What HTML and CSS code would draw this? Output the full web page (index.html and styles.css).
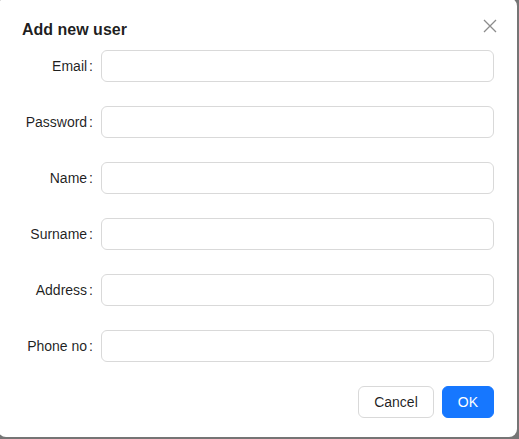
FILE: index.html
```html
<!DOCTYPE html>
<html>
<head>
<meta charset="utf-8">
<link rel="stylesheet" href="styles.css">
</head>
<body>
<div class="modal">
  <div class="modal-header">
    <div class="modal-title">Add new user</div>
    <button class="modal-close" aria-label="Close">
      <svg width="14" height="14" viewBox="0 0 14 14"><path d="M1 1 L13 13 M13 1 L1 13" stroke="#8c8c8c" stroke-width="1.3" fill="none"/></svg>
    </button>
  </div>
  <form class="form">
    <div class="row"><label class="label">Email<span class="colon">:</span></label><input class="input" type="text"></div>
    <div class="row"><label class="label">Password<span class="colon">:</span></label><input class="input" type="password"></div>
    <div class="row"><label class="label">Name<span class="colon">:</span></label><input class="input" type="text"></div>
    <div class="row"><label class="label">Surname<span class="colon">:</span></label><input class="input" type="text"></div>
    <div class="row"><label class="label">Address<span class="colon">:</span></label><input class="input" type="text"></div>
    <div class="row"><label class="label">Phone no<span class="colon">:</span></label><input class="input" type="text"></div>
  </form>
  <div class="footer">
    <button class="btn">Cancel</button>
    <button class="btn btn-primary">OK</button>
  </div>
</div>
</body>
</html>
```

FILE: styles.css
```css
html, body {
  margin: 0;
  padding: 0;
  height: 100%;
  overflow: hidden;
}
body {
  background: #757575;
  font-family: "Liberation Sans", Arial, sans-serif;
  font-size: 14px;
  color: rgba(0, 0, 0, 0.88);
}
.modal {
  box-sizing: border-box;
  width: 519px;
  height: 439px;
  margin: -2px 0 0 -2px;
  background: #fff;
  border-radius: 8px;
  padding: 20px 23px 20px 24px;
  display: flex;
  flex-direction: column;
}
.modal-header {
  display: flex;
  justify-content: space-between;
  align-items: flex-start;
  margin-bottom: 8px;
  position: relative;
}
.modal-title {
  font-size: 16px;
  font-weight: 700;
  line-height: 24px;
  color: rgba(0, 0, 0, 0.88);
}
.modal-close {
  position: absolute;
  top: -3px;
  right: -7px;
  width: 22px;
  height: 22px;
  padding: 0;
  border: 0;
  background: transparent;
  display: flex;
  align-items: center;
  justify-content: center;
}
.form {
  display: flex;
  flex-direction: column;
  gap: 24px;
}
.row {
  display: grid;
  grid-template-columns: 79px 1fr;
  align-items: center;
}
.label {
  text-align: right;
  line-height: 32px;
  white-space: nowrap;
}
.colon {
  margin: 0 8px 0 2px;
}
.input {
  box-sizing: border-box;
  height: 32px;
  width: 100%;
  border: 1px solid #d9d9d9;
  border-radius: 6px;
  padding: 4px 11px;
  font: inherit;
  outline: none;
  background: #fff;
}
.footer {
  margin-top: 24px;
  display: flex;
  justify-content: flex-end;
  gap: 8px;
}
.btn {
  box-sizing: border-box;
  height: 32px;
  padding: 4px 15px;
  border: 1px solid #d9d9d9;
  border-radius: 6px;
  background: #fff;
  font-family: inherit;
  font-size: 14px;
  color: rgba(0, 0, 0, 0.88);
  line-height: 22px;
}
.btn-primary {
  background: #1677ff;
  border-color: #1677ff;
  color: #fff;
}
```
